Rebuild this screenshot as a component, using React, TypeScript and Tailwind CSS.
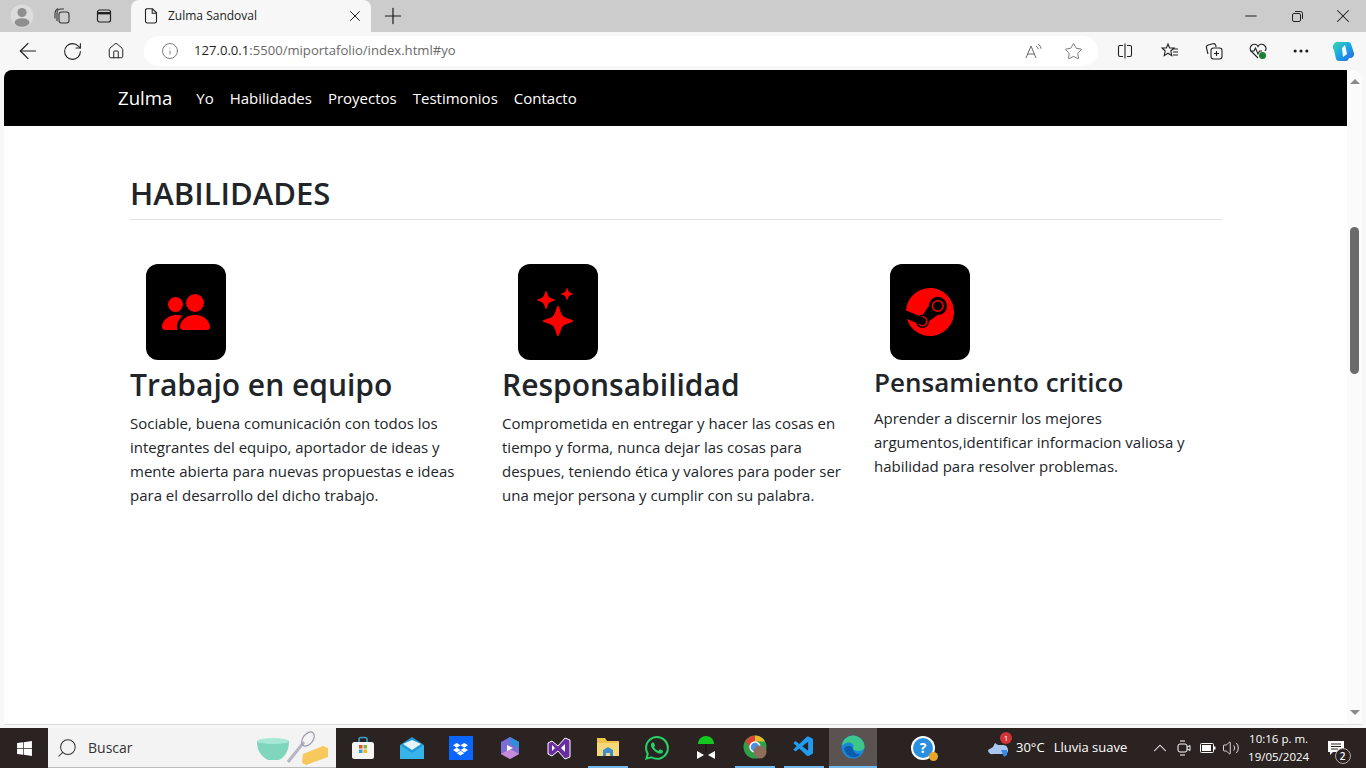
import { ReactNode } from "react";
import {
  Ellipsis,
  Home,
  Info,
  Minus,
  Plus,
  RotateCw,
  Star,
  X,
  ArrowLeft,
  ChevronUp,
  Search,
  Volume2,
} from "lucide-react";
import { BsPeopleFill, BsStars, BsSteam, BsWhatsapp, BsDropbox } from "react-icons/bs";
import { FaWindows } from "react-icons/fa";
import { VscVscode } from "react-icons/vsc";

const nav = ["Yo", "Habilidades", "Proyectos", "Testimonios", "Contacto"];

const skills = [
  {
    icon: <BsPeopleFill size={48} color="#ff0000" />,
    title: "Trabajo en equipo",
    small: false,
    text: "Sociable, buena comunicación con todos los integrantes del equipo, aportador de ideas y mente abierta para nuevas propuestas e ideas para el desarrollo del dicho trabajo.",
  },
  {
    icon: <BsStars size={48} color="#ff0000" />,
    title: "Responsabilidad",
    small: false,
    text: "Comprometida en entregar y hacer las cosas en tiempo y forma, nunca dejar las cosas para despues, teniendo ética y valores para poder ser una mejor persona y cumplir con su palabra.",
  },
  {
    icon: <BsSteam size={48} color="#ff0000" />,
    title: "Pensamiento critico",
    small: true,
    text: "Aprender a discernir los mejores argumentos,identificar informacion valiosa y habilidad para resolver problemas.",
  },
];

function Slot({ w, children }: { w: string; children: ReactNode }) {
  return <div className={`${w} flex h-full shrink-0 items-center justify-center`}>{children}</div>;
}

function TabStrip() {
  return (
    <div className="flex h-8 items-end bg-[#cccccc] text-[#1a1a1a]">
      <div className="flex h-8 w-[44px] items-center justify-center">
        <svg width="24" height="24" viewBox="0 0 24 24">
          <circle cx="12" cy="12" r="11.5" fill="#dcdcdc" />
          <circle cx="12" cy="8.5" r="4.6" fill="#8e8e8e" />
          <ellipse cx="12" cy="18.5" rx="7.5" ry="4.2" fill="#8e8e8e" />
        </svg>
      </div>
      <Slot w="w-[36px]">
        <svg width="18" height="18" viewBox="0 0 18 18" fill="none" stroke="#333" strokeWidth="1.1">
          <rect x="6" y="5" width="10" height="11" rx="2.5" />
          <path d="M4 14V6a4 4 0 0 1 4-4h3M2 11.5V6a5.5 5.5 0 0 1 3-4.5" />
        </svg>
      </Slot>
      <Slot w="w-[47px]">
        <svg width="16" height="16" viewBox="0 0 16 16" fill="none" stroke="#222" strokeWidth="1.2">
          <rect x="1.5" y="2" width="13" height="12" rx="2" />
          <path d="M1.5 5.2h13" strokeWidth="2.4" />
        </svg>
      </Slot>
      <div className="ml-1 flex h-8 w-[240px] items-center rounded-t-lg bg-[#f7f7f7] pl-[13px] pr-[7px]">
        <svg width="14" height="16" viewBox="0 0 14 16" fill="none" stroke="#222" strokeWidth="1.1">
          <path d="M2.5.8h6l4 4v8.4a1.8 1.8 0 0 1-1.8 1.8H3.3a1.8 1.8 0 0 1-1.8-1.8V1.8z" />
          <path d="M8.2 1v4.2h4.2" />
        </svg>
        <span className="ml-[10px] flex-1 text-[12px] text-[#222]">Zulma Sandoval</span>
        <X size={18} strokeWidth={1.3} />
      </div>
      <Slot w="w-[44px]">
        <Plus size={26} strokeWidth={1.1} />
      </Slot>
      <div className="flex-1" />
      <Slot w="w-[46px]">
        <Minus size={18} strokeWidth={1.3} />
      </Slot>
      <Slot w="w-[46px]">
        <svg width="11" height="11" viewBox="0 0 11 11" fill="none" stroke="#222" strokeWidth="1">
          <rect x="0.5" y="2.5" width="8" height="8" rx="1.5" />
          <path d="M3 .5h5.5a2 2 0 0 1 2 2V8" />
        </svg>
      </Slot>
      <Slot w="w-[46px]">
        <X size={22} strokeWidth={1.1} />
      </Slot>
    </div>
  );
}

function Toolbar() {
  return (
    <div className="flex h-[38px] items-center bg-[#f7f7f7] text-[#1f1f1f]">
      <Slot w="w-[50px] ml-[3px]">
        <ArrowLeft size={26} strokeWidth={1.1} />
      </Slot>
      <Slot w="w-[38px]">
        <RotateCw size={21} strokeWidth={1.2} />
      </Slot>
      <Slot w="w-[50px]">
        <Home size={18} strokeWidth={1.3} />
      </Slot>
      <div className="ml-[3px] flex h-[30px] w-[954px] items-center rounded-full bg-white pl-[17px] pr-[15px]">
        <Info size={18} strokeWidth={1.1} color="#666" />
        <span className="ml-[15px] flex-1 text-[13.100px] text-[#6a6a6a]">
          <span className="text-[#1f1f1f]">127.0.0.1</span>:5500/miportafolio/index.html#yo
        </span>
        <svg className="mr-[22px]" width="17" height="17" viewBox="0 0 17 17" fill="none" stroke="#666" strokeWidth="1">
          <path d="M1 15L6 3l5 12M2.800 11h6.400M11 3c1.200.6 2 1.800 2.200 3.200M13 1c1.600 1 2.700 2.600 3 4.600" />
        </svg>
        <Star size={19} strokeWidth={1.1} color="#666" />
      </div>
      <Slot w="w-[54px]">
        <svg width="16" height="16" viewBox="0 0 16 16" fill="none" stroke="#222" strokeWidth="1.1">
          <path d="M6 2.500H3A1.500 1.500 0 0 0 1.500 4v8A1.500 1.500 0 0 0 3 13.500h3M10 2.500h3A1.500 1.500 0 0 1 14.500 4v8a1.500 1.500 0 0 1-1.500 1.500h-3M8 .5v15" />
        </svg>
      </Slot>
      <Slot w="w-[36px]">
        <svg width="18" height="18" viewBox="0 0 18 18" fill="none" stroke="#222" strokeWidth="1.1">
          <path d="M7 2l1.600 4H13l-3.200 3 1 4.600L7 11.200l-3.800 2.400 1-4.600L1 6h4.400zM12 7h5M12 10h5M12 13h5" />
        </svg>
      </Slot>
      <Slot w="w-[52px]">
        <svg width="18" height="18" viewBox="0 0 18 18" fill="none" stroke="#222" strokeWidth="1.1">
          <path d="M3 12L1.500 6a2.500 2.500 0 0 1 1.800-3l4.500-1.200a2.500 2.500 0 0 1 3 1.600L11 5" />
          <rect x="6" y="6" width="11" height="11" rx="2.500" />
          <path d="M11.500 9v5M9 11.500h5" />
        </svg>
      </Slot>
      <Slot w="w-[36px]">
        <svg width="18" height="18" viewBox="0 0 18 18" fill="none">
          <path d="M9 16L2.500 9.500a4 4 0 0 1 0-6 4 4 0 0 1 6.500 1 4 4 0 0 1 6.500-1 4 4 0 0 1 .5 5.500M1 9h4l1.500-3 2.500 6 1.500-3H13" stroke="#222" strokeWidth="1.1" />
          <circle cx="13.500" cy="13.500" r="3.500" fill="#1e7e34" />
        </svg>
      </Slot>
      <Slot w="w-[50px]">
        <Ellipsis size={20} strokeWidth={1.8} />
      </Slot>
      <Slot w="w-[36px]">
        <svg width="24" height="24" viewBox="0 0 24 24">
          <defs>
            <linearGradient id="cop" x1="0" y1="0" x2="1" y2="1">
              <stop offset="0" stopColor="#3dd6a8" />
              <stop offset="0.5" stopColor="#18a5e8" />
              <stop offset="1" stopColor="#2f5fe0" />
            </linearGradient>
          </defs>
          <path d="M7 3h9a3 3 0 0 1 3 2l3 9a4 4 0 0 1-4 5h-1l-1 2a3 3 0 0 1-3 1H7a3 3 0 0 1-3-2L2 11a5 5 0 0 1 5-8z" fill="url(#cop)" />
          <path d="M13 6l2 9-4 3-1-9z" fill="#fff" />
        </svg>
      </Slot>
    </div>
  );
}

function Page() {
  return (
    <div className="flex-1 bg-white font-['Open_Sans','Noto_Sans',sans-serif] text-[#212529]">
      <nav className="flex h-14 items-center bg-black pl-[114px] text-white">
        <span className="text-[18.600px] leading-[30px]">Zulma</span>
        <ul className="ml-4 flex">
          {nav.map((item) => (
            <li key={item} className="px-2 text-[15px]">
              {item}
            </li>
          ))}
        </ul>
      </nav>
      <div className="ml-[126px] w-[1116px] pt-[49px]">
        <h2 className="mr-6 border-b border-[#dee2e6] pb-2 text-[31px] font-semibold leading-[36px]">HABILIDADES</h2>
        <div className="mt-11 grid grid-cols-[372px_372px_372px]">
          {skills.map((s) => (
            <div key={s.title} className="pr-6">
              <div className="ml-4 flex h-24 w-20 items-center justify-center rounded-xl bg-black">{s.icon}</div>
              <h3 className={s.small ? "pt-[5px] text-[26px] font-semibold leading-[34px]" : "pt-[6px] text-[30px] font-semibold leading-[38px]"}>
                {s.title}
              </h3>
              <p className="mt-[7px] text-[15px] leading-6">{s.text}</p>
            </div>
          ))}
        </div>
      </div>
    </div>
  );
}

function Scrollbar() {
  return (
    <div className="flex w-[15px] flex-col items-center bg-[#fbfbfb] py-[9px]">
      <div className="h-0 w-0 border-x-[5px] border-b-[5px] border-x-transparent border-b-[#8a8a8a]" />
      <div className="mt-[143px] h-[147px] w-[9px] rounded-full bg-[#6b6b6b]" />
      <div className="flex-1" />
      <div className="h-0 w-0 border-x-[5px] border-t-[5px] border-x-transparent border-t-[#8a8a8a]" />
    </div>
  );
}

function Taskbar() {
  return (
    <div className="flex h-10 items-center bg-[#2b2321] font-['Open_Sans',sans-serif] text-white">
      <Slot w="w-[48px]">
        <FaWindows size={17} color="#fff" />
      </Slot>
      <div className="flex h-full w-[288px] items-center border-b border-[#bbb] bg-[#f3f3f3] pl-[8px] text-[14px] text-[#333]">
        <Search size={22} strokeWidth={1.1} className="-scale-x-100" />
        <span className="ml-[10px] flex-1">Buscar</span>
        <svg width="76" height="36" viewBox="0 0 76 36">
          <path d="M1 11h32c0 12-6 17-10 19H12C6 27 1 22 1 11z" fill="#7fd6bd" />
          <ellipse cx="17" cy="11" rx="16" ry="3" fill="#a7e8d5" />
          <path d="M32 32l16-20" stroke="#b5b5c5" strokeWidth="3" />
          <ellipse cx="52" cy="9" rx="5" ry="8" fill="none" stroke="#9a9aa8" strokeWidth="1.200" transform="rotate(38 52 9)" />
          <path d="M47 24l20-8 5 2v9l-22 8-4-2z" fill="#f7c95c" />
        </svg>
        <span className="w-[4px]" />
      </div>
      <Slot w="w-[49px] ml-[2px]">
        <svg width="24" height="24" viewBox="0 0 24 24">
          <path d="M8 6V3.500a2 2 0 0 1 2-2h4a2 2 0 0 1 2 2V6" fill="none" stroke="#3aa0c8" strokeWidth="1.600" />
          <rect x="1" y="6" width="22" height="17" rx="2.500" fill="#f5f5f5" />
          <rect x="8" y="9" width="3.500" height="3.500" fill="#e8502a" />
          <rect x="12.500" y="9" width="3.500" height="3.500" fill="#7cb93a" />
          <rect x="8" y="13.500" width="3.500" height="3.500" fill="#2f9fe0" />
          <rect x="12.500" y="13.500" width="3.500" height="3.500" fill="#f7b80c" />
        </svg>
      </Slot>
      <Slot w="w-[49px]">
        <svg width="26" height="24" viewBox="0 0 26 24">
          <path d="M1 9l12-8 12 8v14H1z" fill="#1f9ad6" />
          <path d="M1 9l12 8 12-8v14H1z" fill="#37b5ea" />
          <path d="M4 8l9-4 9 4-9 6z" fill="#e6f4fb" />
        </svg>
      </Slot>
      <Slot w="w-[49px]">
        <div className="flex h-6 w-6 items-center justify-center bg-[#0b66ff]">
          <BsDropbox size={15} color="#fff" />
        </div>
      </Slot>
      <Slot w="w-[49px]">
        <svg width="22" height="24" viewBox="0 0 22 24">
          <path d="M11 1l9 5v12l-9 5-9-5V6z" fill="#7b6fd6" />
          <path d="M11 1l9 5v6l-9-4z" fill="#2f8fdc" />
          <path d="M2 18l9 5 9-5-9-5z" fill="#c58bd8" />
          <path d="M8 9l6 3-6 3z" fill="#fff" />
        </svg>
      </Slot>
      <Slot w="w-[49px]">
        <svg width="24" height="24" viewBox="0 0 24 24">
          <path d="M1 7l4-2 6 5 7-8 5 2v17l-5 2-7-8-6 5-4-2z" fill="#6a2d9f" stroke="#fff" strokeWidth="1" />
          <path d="M5 9v6l3-3zM18 8l-4 4 4 4z" fill="#fff" />
        </svg>
      </Slot>
      <Slot w="w-[40px] mx-[4.500px] border-b-[2px] border-[#76b9ed]">
        <svg width="24" height="22" viewBox="0 0 24 22">
          <path d="M1 2h8l2 3h12v15H1z" fill="#f0c24a" />
          <path d="M1 7h22v13H1z" fill="#f6d77a" />
          <path d="M7 20v-6l5-3 5 3v6h-3v-3h-4v3z" fill="#3f8fd0" />
        </svg>
      </Slot>
      <Slot w="w-[49px]">
        <BsWhatsapp size={24} color="#25d366" />
      </Slot>
      <Slot w="w-[49px]">
        <svg width="20" height="26" viewBox="0 0 20 26">
          <path d="M2 9a8 8 0 0 1 16 0z" fill="#12c81e" />
          <path d="M9.500 9h1v8h-1z" fill="#111" />
          <path d="M1 16l7 4-7 4zM19 16l-7 4 7 4z" fill="#fff" />
        </svg>
      </Slot>
      <Slot w="w-[40px] mx-[4.500px] border-b-[2px] border-[#76b9ed]">
        <svg width="24" height="24" viewBox="0 0 24 24">
          <circle cx="12" cy="12" r="11.500" fill="#2fa04a" />
          <path d="M12 .5a11.500 11.500 0 0 1 10 6H12z" fill="#e8b92c" />
          <path d="M12 .5A11.500 11.500 0 0 0 2.500 6L7 13l5-6.500z" fill="#db4437" />
          <circle cx="12" cy="12" r="5" fill="#4a8fe8" stroke="#fff" strokeWidth="1.500" />
          <circle cx="17" cy="17" r="6.500" fill="#8d6e5a" />
        </svg>
      </Slot>
      <Slot w="w-[40px] mx-[4.500px] border-b-[2px] border-[#76b9ed]">
        <VscVscode size={24} color="#1f9cf0" />
      </Slot>
      <Slot w="w-[48px] ml-[1px] bg-[#5a5351] border-b-[2px] border-[#76b9ed]">
        <svg width="24" height="24" viewBox="0 0 24 24">
          <circle cx="12" cy="12" r="11.500" fill="#1b87d6" />
          <path d="M.6 11C2 4 7 .5 12 .5c6 0 11.500 5 11.500 11 0 3-3 4.500-6 4.500-3.500 0-5.500-1.500-5.500-3 0-1 .5-1.500 1-2-1-2.500-3.500-4-6-3.500-3 .5-5 2-6.400 3.500z" fill="#3cc88a" />
          <path d="M3 14c2-4 7-4 8.500-1 .5 4 4 7 8 6-4 5-13 5-16.500-5z" fill="#0d5cab" />
        </svg>
      </Slot>
      <Slot w="w-[22px]">
        <span />
      </Slot>
      <Slot w="w-[48px]">
        <div className="relative flex h-[20px] w-[20px] items-center justify-center rounded-full bg-[#2a8fe0] text-[14px] font-bold leading-none ring-2 ring-white">
          ?
          <span className="absolute -bottom-[3px] -right-[5px] h-[9px] w-[9px] rounded-full bg-[#e8a72c]" />
        </div>
      </Slot>
      <Slot w="w-[44px] ml-[30px]">
        <div className="relative">
          <svg width="24" height="18" viewBox="0 0 24 18">
            <path d="M1 11l5-3 2-4 3 2h5a5 5 0 0 1 3 9H6a4 4 0 0 1-5-4z" fill="#a9c6ee" />
            <path d="M14 11h6v5l-3 2z" fill="#2f8fe8" />
          </svg>
          <span className="absolute -right-[1px] -top-[7px] flex h-[12px] w-[12px] items-center justify-center rounded-full bg-[#d13438] text-[8px]">
            1
          </span>
        </div>
      </Slot>
      <span className="-ml-[5px] text-[13px]">30°C</span>
      <span className="ml-[9px] w-[94px] text-[13px]">Lluvia suave</span>
      <Slot w="w-[24px]">
        <ChevronUp size={22} strokeWidth={1.1} />
      </Slot>
      <Slot w="w-[24px]">
        <svg width="14" height="16" viewBox="0 0 14 16" fill="none" stroke="#fff" strokeWidth="1">
          <rect x="1" y="4" width="9" height="8" rx="2" />
          <path d="M10 7l3-1.500v5L10 9M3 1h5M3 15h5" />
        </svg>
      </Slot>
      <Slot w="w-[24px]">
        <svg width="16" height="10" viewBox="0 0 16 10">
          <rect x=".5" y=".5" width="13" height="9" rx="1" fill="none" stroke="#fff" />
          <rect x="2" y="2" width="9" height="6" fill="#fff" />
          <rect x="14" y="3.500" width="1.500" height="3" fill="#fff" />
        </svg>
      </Slot>
      <Slot w="w-[22px]">
        <Volume2 size={18} strokeWidth={1.1} />
      </Slot>
      <div className="ml-[6px] w-[62px] text-center text-[11.500px] leading-[18px]">
        <div>10:16 p. m.</div>
        <div>19/05/2024</div>
      </div>
      <Slot w="w-[52px]">
        <div className="relative">
          <svg width="16" height="16" viewBox="0 0 16 16">
            <path d="M0 1h16v11H5l-3 3v-3H0z" fill="#fff" />
            <path d="M3 4h10M3 6.500h10M3 9h7" stroke="#2b2321" strokeWidth="1" />
          </svg>
          <span className="absolute -bottom-[8px] -right-[7px] flex h-[16px] w-[16px] items-center justify-center rounded-full border border-[#aaa] bg-[#2b2321] text-[10px] font-semibold">
            2
          </span>
        </div>
      </Slot>
    </div>
  );
}

export default function App() {
  return (
    <div className="flex h-[768px] w-[1366px] flex-col overflow-hidden bg-[#f7f7f7] font-['Open_Sans',sans-serif]">
      <TabStrip />
      <Toolbar />
      <div className="ml-1 mr-1 flex h-[655px] overflow-hidden rounded-t-lg border-b border-[#dedede]">
        <Page />
        <Scrollbar />
      </div>
      <div className="h-[3px]" />
      <Taskbar />
    </div>
  );
}
